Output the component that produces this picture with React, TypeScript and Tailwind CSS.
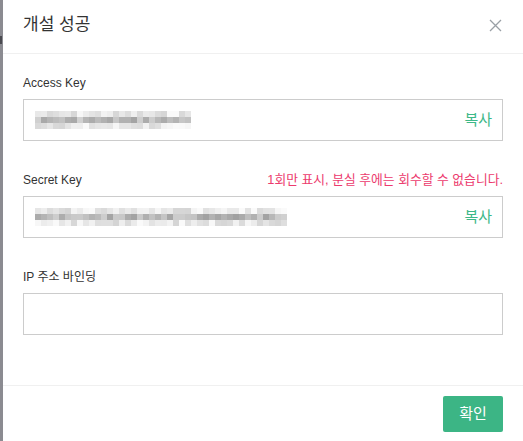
import React from 'react';

const font = { fontFamily: '"Liberation Sans", "Noto Sans CJK KR", sans-serif' };

// masked key preview: deterministic grey mosaic
function Mosaic({ cols, seed }: { cols: number; seed: number }) {
  let s = seed;
  const rand = () => {
    s = (s * 9301 + 49297) % 233280;
    return s / 233280;
  };
  const rows = [0, 1, 2].map((r) =>
    Array.from({ length: cols }, () => {
      const base = r === 1 ? 160 : 212;
      const spread = r === 1 ? 50 : 40;
      const v = Math.round(base + rand() * spread);
      return Math.min(v, 250);
    })
  );
  return (
    <div className="flex flex-col">
      {rows.map((row, i) => (
        <div key={i} className="flex">
          {row.map((v, j) => (
            <div key={j} className="h-[6px] w-[6px]" style={{ background: `rgb(${v},${v},${v})` }} />
          ))}
        </div>
      ))}
    </div>
  );
}

function KeyField({ label, hint, cols, seed }: { label: string; hint?: string; cols?: number; seed?: number }) {
  return (
    <div>
      <div className="flex h-5 items-center justify-between mb-[6px]">
        <span className="text-[12px] text-[#333]">{label}</span>
        {hint && <span className="text-[12.8px] text-[#ec3a6d]">{hint}</span>}
      </div>
      <div className="flex h-[42px] items-center justify-between border border-[#cccccc] pl-[11px] pr-[10px]">
        {cols ? <Mosaic cols={cols} seed={seed ?? 1} /> : <span />}
        {cols ? <span className="text-[15px] text-[#3db888]">복사</span> : null}
      </div>
    </div>
  );
}

export default function App() {
  return (
    <div className="flex h-[441px] w-[523px] overflow-hidden bg-white" style={font}>
      <div className="w-[3px] shrink-0 bg-[#8b8b91] flex flex-col">
        <div className="mt-[36px] h-[8px] w-[2px] bg-[#4a4a50]" />
      </div>
      <div className="flex flex-1 flex-col">
        <div className="flex h-[54px] items-center justify-between border-b border-[#f0f0f0] pl-5 pr-[21px] pb-[3px]">
          <h1 className="text-[17px] text-[#333]">개설 성공</h1>
          <svg width="13" height="13" viewBox="0 0 13 13" className="text-[#9aa0a6]">
            <path d="M1 1L12 12M12 1L1 12" stroke="currentColor" strokeWidth="1.3" />
          </svg>
        </div>

        <div className="flex flex-col gap-[29px] px-5 pt-[19px] pb-[50px]">
          <KeyField label="Access Key" cols={26} seed={7} />
          <KeyField label="Secret Key" hint="1회만 표시, 분실 후에는 회수할 수 없습니다." cols={42} seed={31} />
          <KeyField label="IP 주소 바인딩" />
        </div>

        <div className="flex justify-end border-t border-[#f0f0f0] px-5 pt-[10px]">
          <button className="h-9 w-[60px] rounded-[2px] bg-[#3cb585] text-[15px] text-white">확인</button>
        </div>
      </div>
    </div>
  );
}
